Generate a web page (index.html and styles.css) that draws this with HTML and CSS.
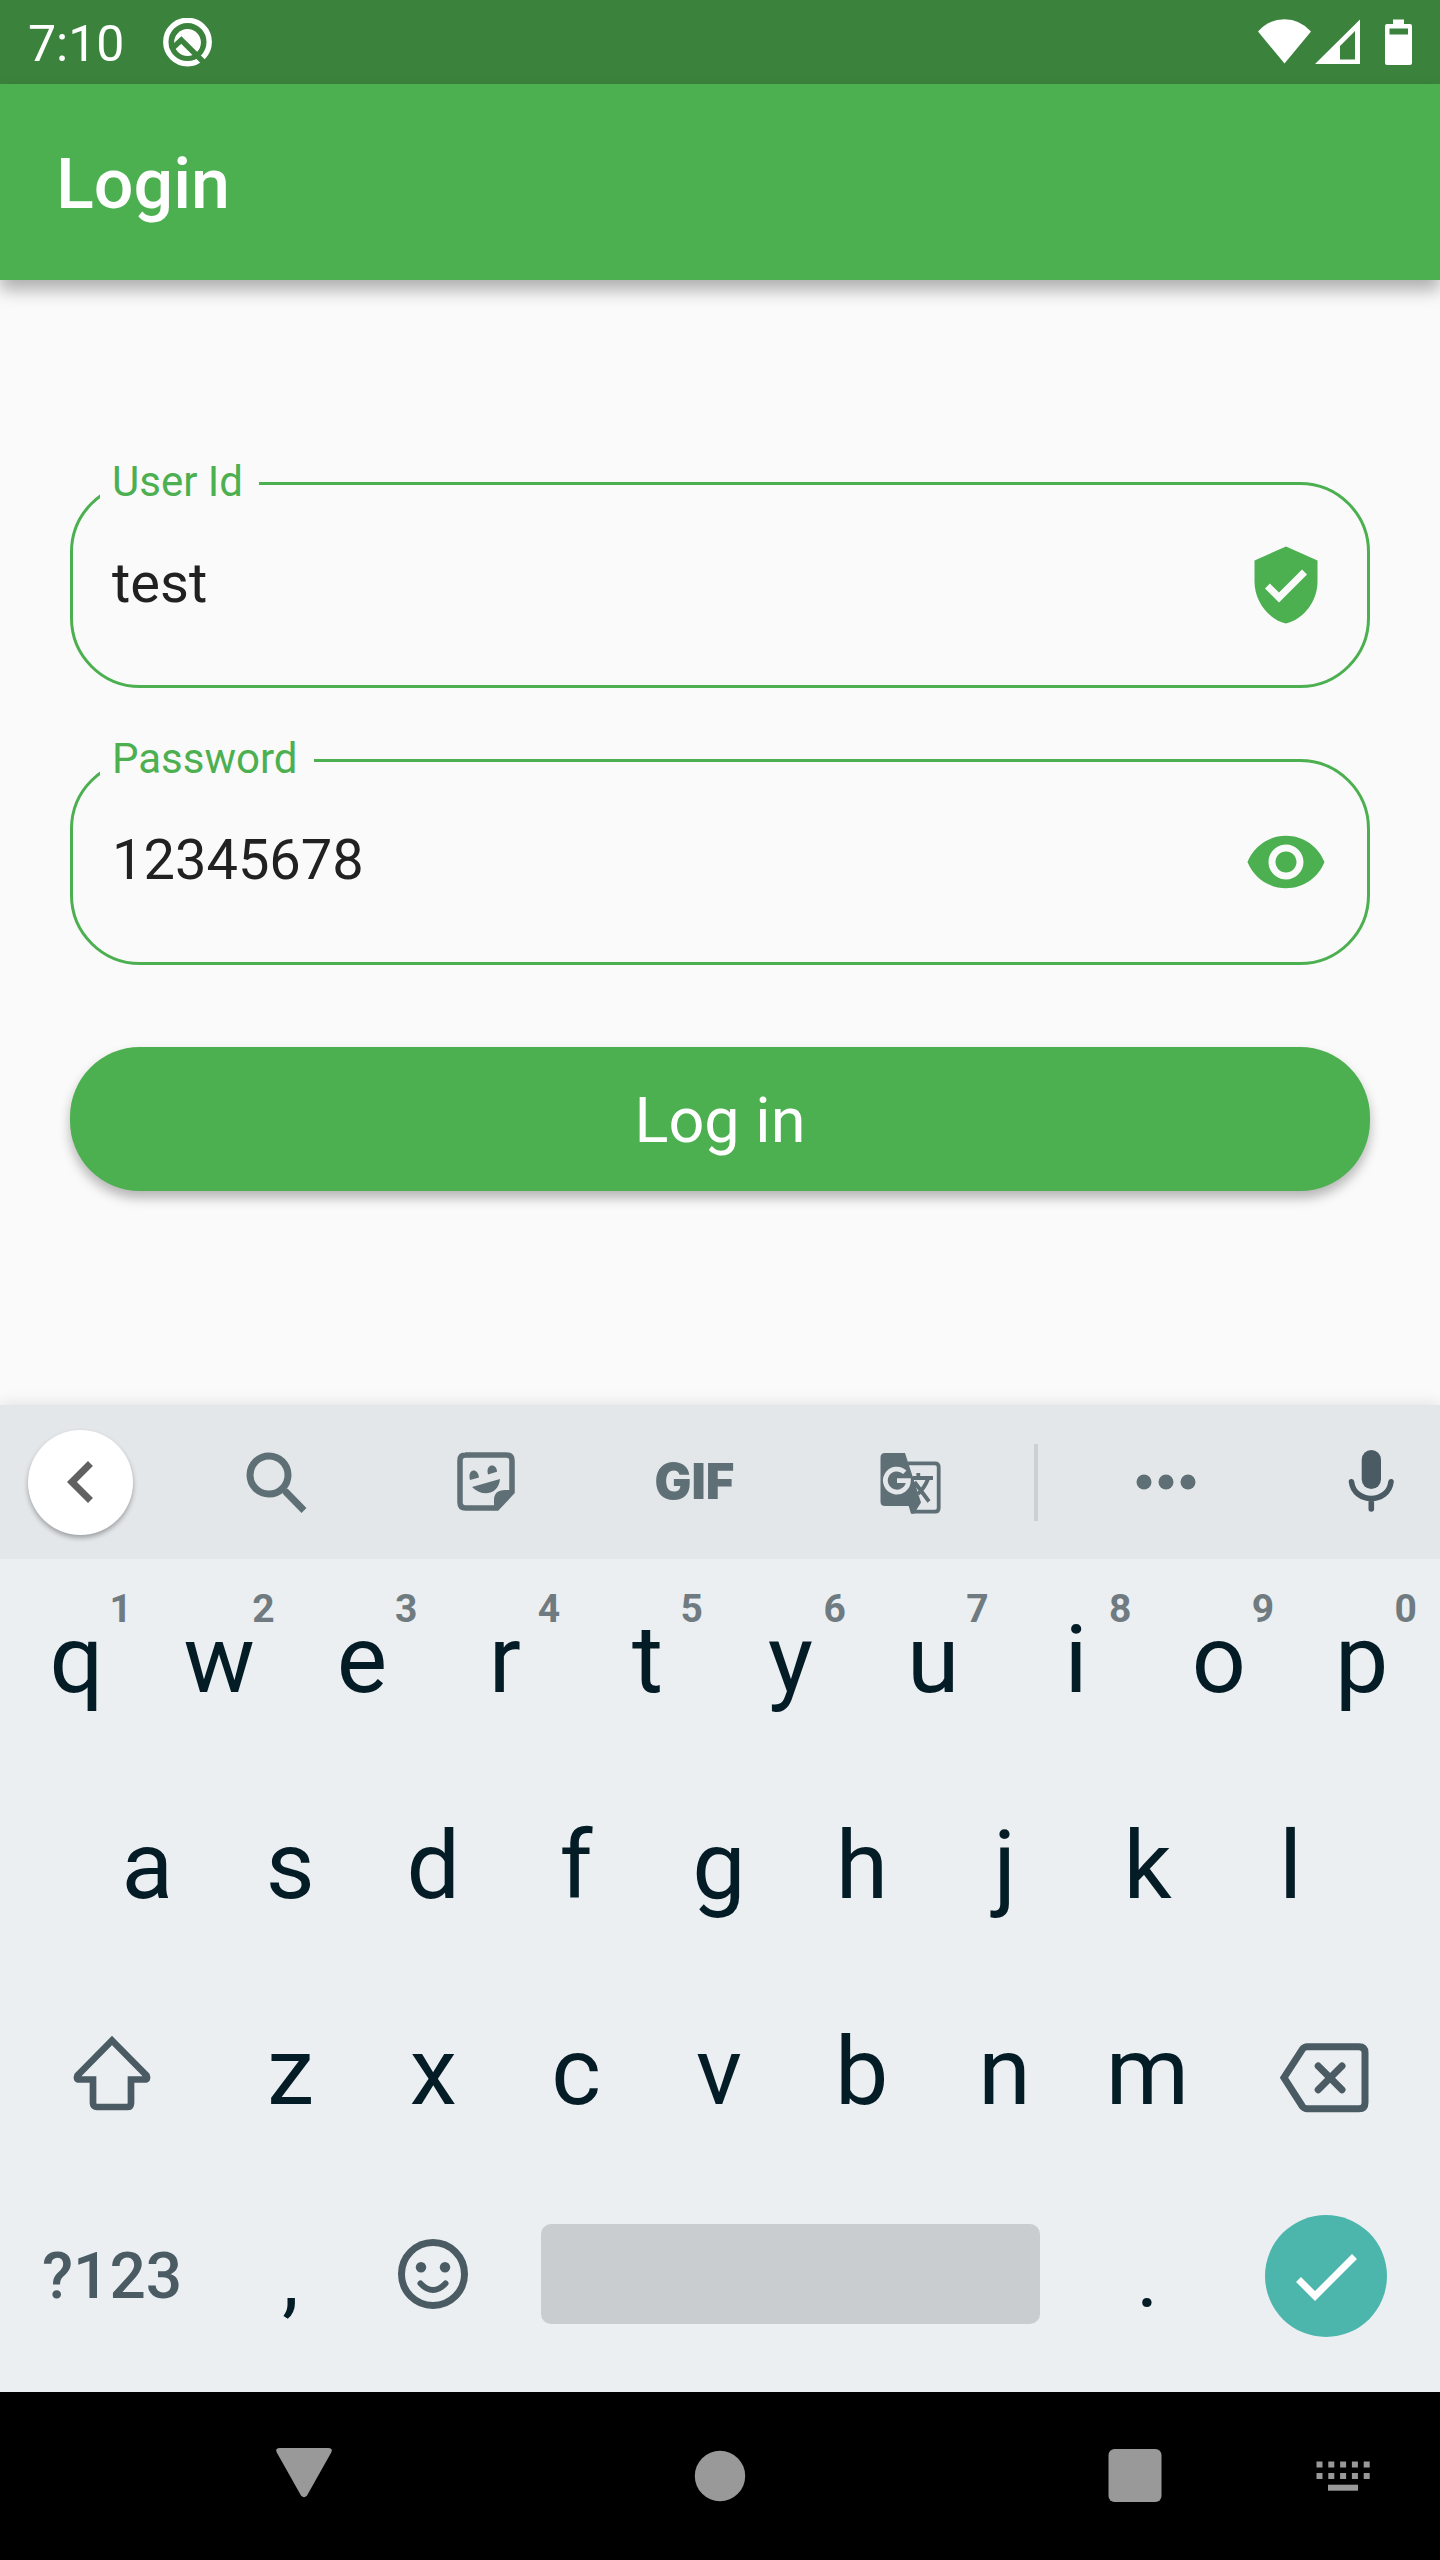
FILE: index.html
```html
<!DOCTYPE html>
<html lang="en">
<head>
<meta charset="utf-8">
<meta name="viewport" content="width=device-width, initial-scale=1">
<title>Login</title>
<link rel="stylesheet" href="styles.css">
</head>
<body>
<div class="screen">
  <div class="status-bar">
    <span class="time">7:10</span>
    <svg class="status-logo" viewBox="0 0 49 49" aria-hidden="true">
      <circle cx="24.5" cy="24" r="21.7" fill="none" stroke="#fff" stroke-width="5.4"/>
      <circle cx="24.5" cy="24.5" r="13.4" fill="#fff"/>
      <path d="M8 31.500L18.300 22L42 45.500" fill="none" stroke="#3b833d" stroke-width="5.600"/>
    </svg>
    <svg class="status-icons" viewBox="0 0 154 49" aria-hidden="true">
      <path d="M0 13.500Q11 1.200 26.500 1.200T53 13.500L26.500 45.500Z" fill="#fff"/>
      <path fill-rule="evenodd" d="M57 46L102 1.500V46ZM82 28V41.500H97V13Z" fill="#fff"/>
      <path fill-rule="evenodd" d="M135 1.500h11v4.500h6q2 0 2 2V45q0 2-2 2h-23q-2 0-2-2V8q0-2 2-2h6ZM131.500 10.500V16.500h18.500V10.500Z" fill="#fff"/>
    </svg>
  </div>

  <header class="app-bar"><h1>Login</h1></header>

  <main class="content">
    <form class="login">
      <fieldset class="field">
        <legend><label for="user">User Id</label></legend>
        <div class="field-row">
          <input id="user" type="text" value="test">
          <svg class="icon" viewBox="0 0 24 24" aria-hidden="true"><path fill="currentColor" d="M12 1L3 5v6c0 5.550 3.840 10.740 9 12 5.160-1.260 9-6.450 9-12V5l-9-4zm-2 16l-4-4 1.410-1.410L10 14.170l6.590-6.590L18 9l-8 8z"/></svg>
        </div>
      </fieldset>
      <fieldset class="field">
        <legend><label for="pass">Password</label></legend>
        <div class="field-row">
          <input id="pass" type="text" value="12345678">
          <button class="reveal" type="button" aria-label="Hide password">
            <svg class="icon" viewBox="0 0 24 24" aria-hidden="true"><path fill="currentColor" d="M12 4.500C7 4.500 2.730 7.610 1 12c1.730 4.390 6 7.500 11 7.500s9.270-3.110 11-7.500c-1.730-4.390-6-7.500-11-7.500zM12 17c-2.760 0-5-2.240-5-5s2.240-5 5-5 5 2.240 5 5-2.240 5-5 5zm0-8c-1.660 0-3 1.340-3 3s1.340 3 3 3 3-1.340 3-3-1.340-3-3-3z"/></svg>
          </button>
        </div>
      </fieldset>
      <button class="submit" type="button">Log in</button>
    </form>
  </main>

  <section class="keyboard" aria-label="Keyboard">
    <div class="toolbar">
      <button class="collapse" aria-label="Back"><svg class="icon" viewBox="0 0 24 24"><path fill="#616161" d="M15.410 7.410L14 6l-6 6 6 6 1.410-1.410L10.830 12z"/></svg></button>
      <div class="tools">
        <button aria-label="Search"><svg class="icon" viewBox="0 0 84 84" fill="none" stroke="currentColor">
          <circle cx="34" cy="35" r="19" stroke-width="7"/><path d="M50 51L69 70.500" stroke-width="7"/><path d="M46 47L52 53" stroke-width="5"/></svg></button>
        <button aria-label="Stickers"><svg class="icon" viewBox="1 0 84 84">
          <path d="M20 15H61.500Q67 15 67 20.500V52L52 68H20.500Q15 68 15 62.500V20.500Q15 15 20.500 15Z" fill="none" stroke="currentColor" stroke-width="5.500"/>
          <path fill="currentColor" d="M49 69V60Q49 50 60 50H69L52 70ZM25 40C22 29 33 27 34 37.500ZM43 34.500C40 23.500 52 22.500 52 31.800ZM27 47L55 39C54 54 38 58 27 47Z"/></svg></button>
        <button class="gif">GIF</button>
        <button aria-label="Translate"><svg class="icon" viewBox="0 0 84 84">
          <path fill="currentColor" d="M17 13H37L53 62.500L46 73.700H43L40.700 66H17Q12.500 66 12.500 61.500V17.500Q12.500 13 17 13Z"/>
          <path d="M40 23.300H67Q70.700 23.300 70.700 27V68Q70.700 71.700 67 71.700H45M44.500 38H65M50.300 33V38M60 39Q57 47 50 54M46.500 42L61 61.500" fill="none" stroke="currentColor" stroke-width="3.800"/>
          <path d="M36.800 32.200A11.500 11.500 0 1 0 40.400 40.700H29" fill="none" stroke="#e3e7ea" stroke-width="4.800"/></svg></button>
      </div>
      <span class="divider"></span>
      <button aria-label="More"><svg class="icon" viewBox="0 0 84 84" fill="currentColor"><circle cx="20" cy="42" r="7.500"/><circle cx="42" cy="42" r="7.500"/><circle cx="64" cy="42" r="7.500"/></svg></button>
      <button class="mic" aria-label="Voice input"><svg class="icon" viewBox="0 0 84 84">
        <rect x="32.700" y="10" width="19.300" height="39" rx="9.650" fill="currentColor"/>
        <path d="M22.500 41.700C25 64 59.500 64 62 41.700M42.300 60V69" fill="none" stroke="currentColor" stroke-width="5.600" stroke-linecap="round"/></svg></button>
    </div>

    <div class="keys">
      <div class="row">
        <button class="key">q<span class="hint">1</span></button><button class="key">w<span class="hint">2</span></button><button class="key">e<span class="hint">3</span></button><button class="key">r<span class="hint">4</span></button><button class="key">t<span class="hint">5</span></button><button class="key">y<span class="hint">6</span></button><button class="key">u<span class="hint">7</span></button><button class="key">i<span class="hint">8</span></button><button class="key">o<span class="hint">9</span></button><button class="key">p<span class="hint">0</span></button>
      </div>
      <div class="row row-home">
        <button class="key">a</button><button class="key">s</button><button class="key">d</button><button class="key">f</button><button class="key">g</button><button class="key">h</button><button class="key">j</button><button class="key">k</button><button class="key">l</button>
      </div>
      <div class="row">
        <button class="key key-wide" aria-label="Shift"><svg class="icon" viewBox="0 0 84 84"><path d="M42 11.500L76.500 46.500Q78.500 50.500 74.500 50.500H61V74Q61 78 57 78H27Q23 78 23 74V50.500H9.500Q5.500 50.500 7.500 46.500Z" fill="none" stroke="currentColor" stroke-width="6.700"/></svg></button>
        <button class="key">z</button><button class="key">x</button><button class="key">c</button><button class="key">v</button><button class="key">b</button><button class="key">n</button><button class="key">m</button>
        <button class="key key-wide" aria-label="Backspace"><svg class="icon" viewBox="0 0 84 84" fill="none" stroke="currentColor" stroke-width="7"><path d="M0 48.700L18.500 20Q20.500 17.700 23 17.700H75Q81 17.700 81 23.700V73.700Q81 79.700 75 79.700H23Q20.500 79.700 18.500 77.500Z"/><path stroke-linecap="round" d="M34.200 37L58 60.700M58 37L34.200 60.700"/></svg></button>
      </div>
      <div class="row row-bottom">
        <button class="key key-wide symbols">?123</button>
        <button class="key punct">,</button>
        <button class="key" aria-label="Emoji"><svg class="icon" viewBox="0 0 84 84"><circle cx="42" cy="42" r="31.500" fill="none" stroke="currentColor" stroke-width="7"/><circle cx="30" cy="35.300" r="5.200" fill="currentColor"/><circle cx="54" cy="35.300" r="5.200" fill="currentColor"/><path d="M29.500 51.500Q42 64.500 54.500 51.500" fill="none" stroke="currentColor" stroke-width="6" stroke-linecap="round"/></svg></button>
        <button class="key key-space" aria-label="Space"><span class="space-bar"></span></button>
        <button class="key punct">.</button>
        <button class="key key-wide key-done" aria-label="Done"><span class="enter"><svg class="icon" viewBox="0 0 84 84"><path d="M14.500 45.500L31 62L70.500 22.500" fill="none" stroke="#fff" stroke-width="7"/></svg></span></button>
      </div>
    </div>
  </section>

  <nav class="nav-bar" aria-label="System">
    <button class="nav-back" aria-label="Back"><svg class="icon" viewBox="0 0 84 84"><path fill="currentColor" d="M18 14H66Q71 14 69.500 18L45 61.500Q42 65 39 61.500L14.500 18Q13 14 18 14Z"/></svg></button>
    <button class="nav-home" aria-label="Home"><svg class="icon" viewBox="0 0 84 84"><circle cx="42" cy="42" r="25.200" fill="currentColor"/></svg></button>
    <button class="nav-recent" aria-label="Recent apps"><svg class="icon" viewBox="0 0 84 84"><rect x="14.500" y="15" width="53" height="53" rx="6" fill="currentColor"/></svg></button>
    <button class="nav-ime" aria-label="Choose keyboard"><svg class="icon" viewBox="0 0 84 84"><path d="M18.500 30.500H72M18.500 42H72" stroke="currentColor" stroke-width="6" stroke-dasharray="6 5.800"/><path d="M30 53.700H60" stroke="currentColor" stroke-width="6"/></svg></button>
  </nav>
</div>
</body>
</html>
```
FILE: styles.css
```css
:root {
  --green: #4caf50;
  --ink: #041c26;
  --key-icon: #4a5b63;
  --tool-icon: #5f6f76;
}

*, *::before, *::after { box-sizing: border-box; }

body {
  margin: 0;
  font-family: Roboto, "Liberation Sans", sans-serif;
  background: #fafafa;
}

button {
  margin: 0;
  padding: 0;
  border: 0;
  background: none;
  color: inherit;
  font: inherit;
}

.icon {
  display: block;
  flex: none;
  width: 84px;
  height: 84px;
  overflow: visible;
}

.screen {
  display: flex;
  flex-direction: column;
  min-height: 100vh;
}

/* Status bar */
.status-bar {
  display: flex;
  align-items: center;
  height: 84px;
  padding: 0 28px;
  background: #3b833d;
  color: #fff;
}

.time {
  padding-top: 4px;
  font-size: 50px;
  line-height: 60px;
}

.status-logo {
  width: 49px;
  height: 49px;
  margin-left: 39px;
}

.status-icons {
  width: 154px;
  height: 49px;
  margin-left: auto;
}

/* App bar */
.app-bar {
  display: flex;
  align-items: center;
  height: 196px;
  padding: 4px 56px 0;
  background: var(--green);
  color: #fff;
  box-shadow: 0 10px 16px rgba(0, 0, 0, 0.3);
}

.app-bar h1 {
  margin: 0;
  font-size: 70px;
  font-weight: 500;
  line-height: 84px;
}

/* Form */
.content {
  flex: 1;
  padding: 178px 70px 48px;
}

.login {
  display: flex;
  flex-direction: column;
  gap: 47px;
}

.field {
  min-width: 0;
  margin: 0;
  padding: 0 39px 24px;
  border: 3px solid var(--green);
  border-radius: 70px;
  color: var(--green);
}

.field legend {
  margin-left: -12px;
  padding: 0 16px 2px 12px;
  font-size: 42px;
  line-height: 48px;
}

.field-row {
  display: flex;
  align-items: center;
  height: 153px;
}

.field input {
  flex: 1;
  min-width: 0;
  height: 100%;
  padding: 0 0 4px;
  border: 0;
  outline: 0;
  background: transparent;
  color: #212121;
  font: 56px Roboto, "Liberation Sans", sans-serif;
}

.submit {
  height: 144px;
  margin-top: 35px;
  padding-top: 2px;
  border-radius: 70px;
  background: var(--green);
  color: #fff;
  font-size: 63px;
  box-shadow: 0 7px 12px rgba(0, 0, 0, 0.28);
}

/* Keyboard */
.keyboard {
  background: #ebeff2;
  color: var(--ink);
  box-shadow: 0 0 16px rgba(0, 0, 0, 0.12);
}

.toolbar {
  display: grid;
  grid-template-columns: 171fr 844fr 42fr 218fr 165fr;
  align-items: center;
  justify-items: center;
  height: 154px;
  background: #e3e7ea;
  color: var(--tool-icon);
}

.collapse {
  display: grid;
  place-items: center;
  justify-self: start;
  width: 105px;
  height: 105px;
  margin-left: 28px;
  border-radius: 50%;
  background: #fff;
  box-shadow: 0 3px 5px rgba(0, 0, 0, 0.3);
}

.tools {
  display: grid;
  grid-template-columns: repeat(4, 1fr);
  align-items: center;
  justify-items: center;
  width: 100%;
}

.gif {
  padding: 0 8px 2px 0;
  font-family: Inter, Roboto, sans-serif;
  font-size: 49px;
  font-weight: 900;
}

.divider {
  width: 4px;
  height: 77px;
  background: #cbd0d3;
}

.mic {
  justify-self: end;
  padding-right: 27px;
  color: var(--key-icon);
}

.keys {
  padding: 0 7px 9px 5px;
}

.row {
  display: flex;
  height: 206px;
}

.row-home {
  padding: 0 71px;
}

.key {
  position: relative;
  display: flex;
  flex: 2 1 0;
  align-items: center;
  justify-content: center;
  min-width: 0;
  padding-bottom: 6px;
  font-size: 95px;
}

.key-wide { flex-grow: 3; }
.key-space { flex-grow: 8; }
.key .icon { color: var(--key-icon); }

.hint {
  position: absolute;
  top: 27px;
  right: 16px;
  color: #6f7b80;
  font-size: 39px;
  font-weight: 700;
  line-height: 46px;
}

.row-bottom .key { padding-bottom: 12px; }

.row-bottom .punct {
  padding-bottom: 4px;
  font-size: 84px;
}

.row-bottom .symbols,
.row-bottom .key-done {
  padding-bottom: 8px;
}

.symbols {
  color: var(--key-icon);
  font-size: 64px;
  font-weight: 500;
}

.space-bar {
  flex: 1;
  height: 100px;
  margin: 0 36px;
  border-radius: 10px;
  background: #c9cdd0;
}

.enter {
  display: grid;
  place-items: center;
  width: 122px;
  height: 122px;
  border-radius: 50%;
  background: #4db6ac;
}

/* System navigation */
.nav-bar {
  display: grid;
  grid-template-columns: 200fr repeat(5, 208fr) 200fr;
  align-items: center;
  justify-items: center;
  height: 168px;
  background: #000;
  color: #999;
}

.nav-back { grid-column: 2; }
.nav-home { grid-column: 4; }
.nav-recent { grid-column: 6; }
.nav-ime { grid-column: 7; }
```
